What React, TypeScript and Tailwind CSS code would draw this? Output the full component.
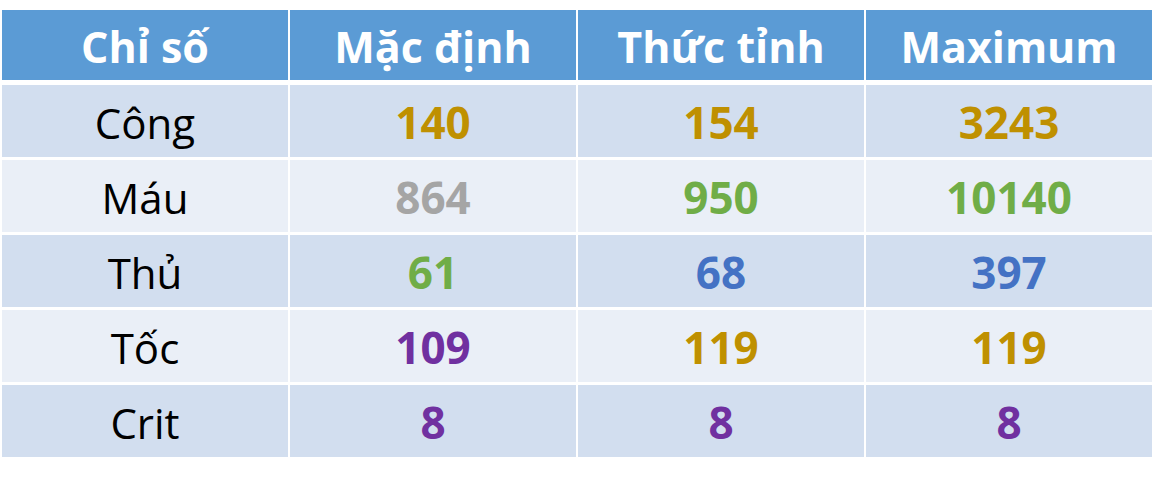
import React from 'react';

type Cell = { v: string; c: string };

const GOLD = 'text-[#bf9000]';
const GRAY = 'text-[#a5a5a5]';
const GREEN = 'text-[#70ad47]';
const BLUE = 'text-[#4472c4]';
const PURPLE = 'text-[#7030a0]';

const headers = ['Chỉ số', 'Mặc định', 'Thức tỉnh', 'Maximum'];

const rows: { name: string; cells: Cell[] }[] = [
  { name: 'Công', cells: [{ v: '140', c: GOLD }, { v: '154', c: GOLD }, { v: '3243', c: GOLD }] },
  { name: 'Máu', cells: [{ v: '864', c: GRAY }, { v: '950', c: GREEN }, { v: '10140', c: GREEN }] },
  { name: 'Thủ', cells: [{ v: '61', c: GREEN }, { v: '68', c: BLUE }, { v: '397', c: BLUE }] },
  { name: 'Tốc', cells: [{ v: '109', c: PURPLE }, { v: '119', c: GOLD }, { v: '119', c: GOLD }] },
  { name: 'Crit', cells: [{ v: '8', c: PURPLE }, { v: '8', c: PURPLE }, { v: '8', c: PURPLE }] },
];

export default function App() {
  return (
    <div className="w-[1156px] h-[482px] bg-white pt-[10px] pl-[2px] font-['Open_Sans',sans-serif]">
      {/* header */}
      <div className="grid grid-cols-[286px_286px_286px_286px] gap-x-[2px] h-[70px]">
        {headers.map((h) => (
          <div key={h} className="bg-[#5b9bd5] flex items-center justify-center pt-[5px] text-white font-bold text-[43px]">
            {h}
          </div>
        ))}
      </div>

      <div className="flex flex-col gap-y-[3px] mt-[5px]">
        {rows.map((r, i) => {
          const bg = i % 2 === 0 ? 'bg-[#d2deef]' : 'bg-[#eaeff7]';
          return (
            <div key={r.name} className="grid grid-cols-[286px_286px_286px_286px] gap-x-[2px] h-[72px]">
              <div className={`${bg} flex items-center justify-center pt-[2px] text-black text-[42px]`}>{r.name}</div>
              {r.cells.map((c, j) => (
                <div key={j} className={`${bg} flex items-center justify-center pt-[2px] font-bold text-[44px] ${c.c}`}>
                  {c.v}
                </div>
              ))}
            </div>
          );
        })}
      </div>
    </div>
  );
}
